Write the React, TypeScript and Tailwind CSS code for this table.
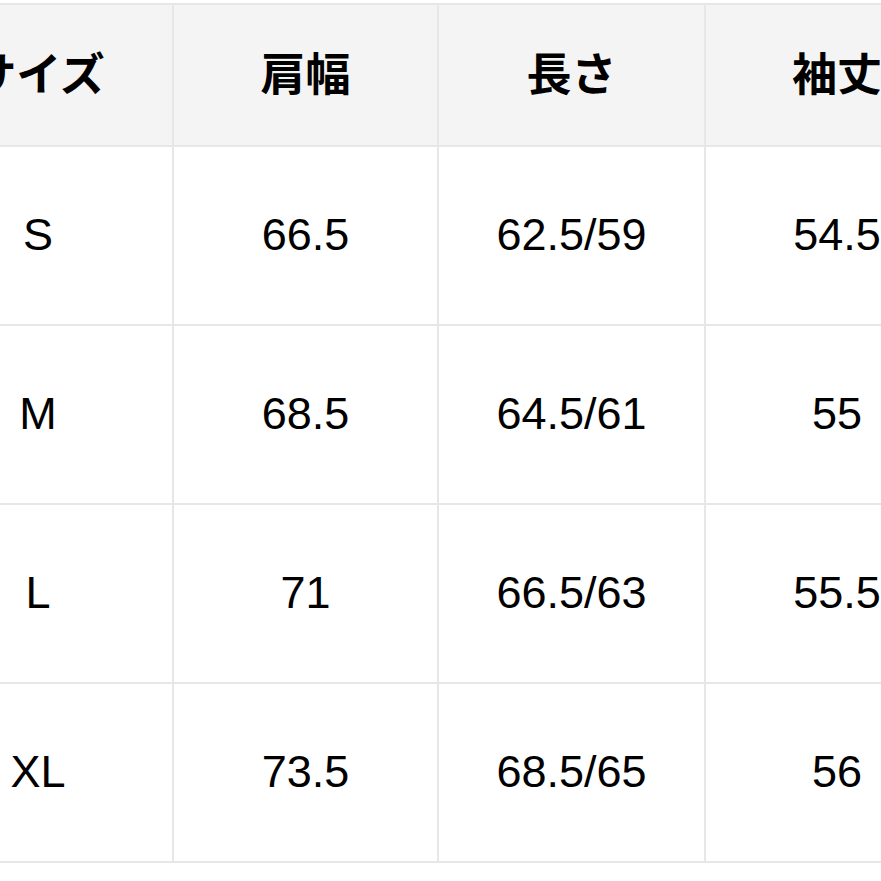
import React from "react";

const headers = ["サイズ", "肩幅", "長さ", "袖丈"];
const rows = [
  ["S", "66.5", "62.5/59", "54.5"],
  ["M", "68.5", "64.5/61", "55"],
  ["L", "71", "66.5/63", "55.5"],
  ["XL", "73.5", "68.5/65", "56"],
];

export default function App() {
  return (
    <div className="w-[881px] h-[881px] bg-white overflow-hidden">
      <div className="mt-[3px] ml-[-98px] w-max grid grid-cols-[268px_263px_265px_262px] grid-rows-[140px_177px_177px_177px_177px] gap-[2px] p-[2px] bg-[#e7e7e7]">
        {headers.map((h) => (
          <div
            key={h}
            className="bg-[#f4f4f4] flex items-center justify-center text-[45px] font-bold text-black pb-[7px]"
            style={{ fontFamily: '"Noto Sans CJK JP", sans-serif' }}
          >
            {h}
          </div>
        ))}
        {rows.flat().map((c, i) => (
          <div
            key={i}
            className="bg-white flex items-center justify-center text-[45px] text-black pb-[2px]"
            style={{ fontFamily: '"Liberation Sans", Arial, sans-serif' }}
          >
            {c}
          </div>
        ))}
      </div>
    </div>
  );
}
